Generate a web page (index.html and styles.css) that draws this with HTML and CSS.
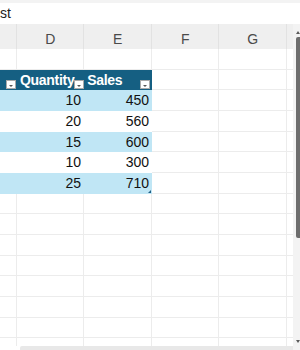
FILE: index.html
```html
<!DOCTYPE html>
<html>
<head>
<meta charset="utf-8">
<link rel="stylesheet" href="styles.css">
</head>
<body>
<div class="topstrip"></div>
<div class="formula">st</div>
<div class="main">
  <div class="sheet">
    <div class="colhead">
      <div class="hc"></div><div class="hc">D</div><div class="hc">E</div><div class="hc">F</div><div class="hc">G</div><div class="hc"></div>
    </div>
    <div class="rows">
      <div class="row"><div class="c"></div><div class="c"></div><div class="c"></div><div class="c"></div><div class="c"></div><div class="c"></div></div>
      <div class="row">
        <div class="c th"><span class="dd"></span></div>
        <div class="c th"><span class="tht">Quantity</span><span class="dd"></span></div>
        <div class="c th"><span class="tht">Sales</span><span class="dd"></span></div>
        <div class="c"></div><div class="c"></div><div class="c"></div>
      </div>
      <div class="row"><div class="c band"></div><div class="c band num">10</div><div class="c band num e">450</div><div class="c"></div><div class="c"></div><div class="c"></div></div>
      <div class="row"><div class="c plain"></div><div class="c plain num">20</div><div class="c plain num e">560</div><div class="c"></div><div class="c"></div><div class="c"></div></div>
      <div class="row"><div class="c band"></div><div class="c band num">15</div><div class="c band num e">600</div><div class="c"></div><div class="c"></div><div class="c"></div></div>
      <div class="row"><div class="c plain"></div><div class="c plain num">10</div><div class="c plain num e">300</div><div class="c"></div><div class="c"></div><div class="c"></div></div>
      <div class="row"><div class="c band"></div><div class="c band num">25</div><div class="c band num e last">710</div><div class="c"></div><div class="c"></div><div class="c"></div></div>
      <div class="row"><div class="c"></div><div class="c"></div><div class="c"></div><div class="c"></div><div class="c"></div><div class="c"></div></div>
      <div class="row"><div class="c"></div><div class="c"></div><div class="c"></div><div class="c"></div><div class="c"></div><div class="c"></div></div>
      <div class="row"><div class="c"></div><div class="c"></div><div class="c"></div><div class="c"></div><div class="c"></div><div class="c"></div></div>
      <div class="row"><div class="c"></div><div class="c"></div><div class="c"></div><div class="c"></div><div class="c"></div><div class="c"></div></div>
      <div class="row"><div class="c"></div><div class="c"></div><div class="c"></div><div class="c"></div><div class="c"></div><div class="c"></div></div>
      <div class="row"><div class="c"></div><div class="c"></div><div class="c"></div><div class="c"></div><div class="c"></div><div class="c"></div></div>
      <div class="row"><div class="c"></div><div class="c"></div><div class="c"></div><div class="c"></div><div class="c"></div><div class="c"></div></div>
      <div class="row"><div class="c"></div><div class="c"></div><div class="c"></div><div class="c"></div><div class="c"></div><div class="c"></div></div>
    </div>
    <div class="hbar-wrap"><div class="hbar"></div></div>
  </div>
  <div class="vscroll">
    <div class="arrow-up"></div>
    <div class="thumb"></div>
    <div class="spacer"></div>
    <div class="arrow-down"></div>
  </div>
</div>
</body>
</html>
```
FILE: styles.css
```css
* { box-sizing: border-box; }
html, body { margin: 0; padding: 0; }
body {
  width: 300px;
  height: 350px;
  overflow: hidden;
  background: #ffffff;
  font-family: "Liberation Sans", Arial, sans-serif;
  font-size: 14px;
  color: #111;
}
.topstrip { height: 3px; background: #f3f3f3; }
.formula {
  height: 21px;
  line-height: 21px;
  padding-left: 0;
  font-size: 14px;
  color: #222;
  background: #fff;
}
.main { display: flex; height: 326px; }
.sheet { width: 293px; display: flex; flex-direction: column; }
.colhead {
  display: grid;
  grid-template-columns: 17.3px 67.2px 67.5px 67.5px 67.5px 6px;
  height: 25px;
  background: #efefef;
}
.hc {
  border-right: 1px solid #e2e2e2;
  text-align: center;
  padding-top: 7px;
  line-height: 16px;
  color: #4a4a4a;
  font-size: 14px;
}
.hc:last-child { border-right: none; }
.rows { height: 297px; overflow: hidden; }
.row {
  display: grid;
  grid-template-columns: 17.3px 67.2px 67.5px 67.5px 67.5px 6px;
  height: 20.67px;
}
.c {
  border-right: 1px solid #ececec;
  border-bottom: 1px solid #ececec;
  line-height: 16px;
}
.c:last-child { border-right: none; }
.th {
  background: #155f82;
  border-color: transparent;
  color: #fff;
  font-weight: bold;
  display: flex;
  align-items: flex-end;
  padding-left: 2.7px;
  padding-right: 0.8px;
}
.tht { letter-spacing: -0.3px; padding-bottom: 1px; white-space: nowrap; }
.dd {
  margin-left: auto;
  width: 10px;
  height: 9px;
  margin-bottom: 0.5px;
  background: #fff;
  border: 1px solid #a9a9a9;
  display: flex;
  align-items: flex-end;
  justify-content: center;
  padding-bottom: 1px;
  flex-shrink: 0;
}
.dd::after {
  content: "";
  border-left: 2px solid transparent;
  border-right: 2px solid transparent;
  border-top: 2px solid #555;
}
.band { background: #c0e6f5; border-color: transparent; }
.plain { background: #fff; border-color: transparent; }
.num {
  display: flex;
  align-items: flex-end;
  justify-content: flex-end;
  padding-right: 2.5px;
  padding-bottom: 1.5px;
  color: #111;
}
.num.e { padding-right: 2px; }
.last { position: relative; }
.last::after {
  content: "";
  position: absolute;
  right: 0;
  bottom: 0;
  border-left: 3px solid transparent;
  border-bottom: 3px solid #1f5f86;
}
.hbar-wrap { height: 4px; padding-left: 20px; }
.hbar { height: 4px; background: #e8e8e8; border-radius: 2px 0 0 0; }
.vscroll {
  width: 7px;
  background: #f3f3f3;
  display: flex;
  flex-direction: column;
  align-items: flex-end;
}
.arrow-up {
  margin-top: 7px;
  width: 0; height: 0;
  border-left: 2.5px solid transparent;
  border-right: 2.5px solid transparent;
  border-bottom: 3px solid #5a5a5a;
}
.thumb {
  margin-top: 3px;
  width: 4px;
  height: 201px;
  background: #6d6d6d;
  border-radius: 2px 0 0 2px;
}
.spacer { flex: 1; }
.arrow-down {
  margin-bottom: 7px;
  width: 0; height: 0;
  border-left: 2.5px solid transparent;
  border-right: 2.5px solid transparent;
  border-top: 3px solid #5a5a5a;
}
```
